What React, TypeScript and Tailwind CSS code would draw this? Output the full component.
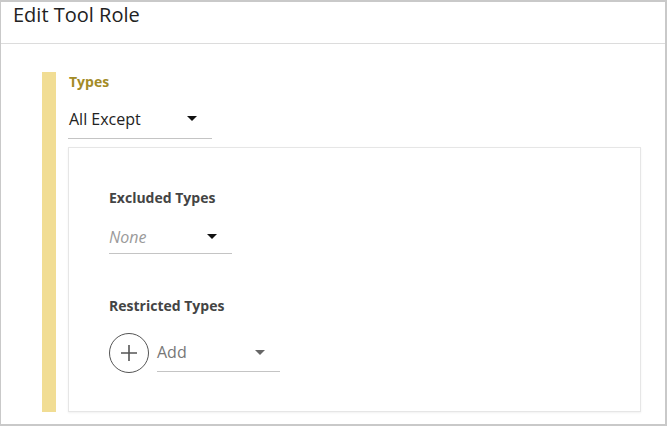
import React from "react";

const Caret = ({ className = "" }: { className?: string }) => (
  <svg width="10" height="5" viewBox="0 0 10 5" className={className}>
    <path d="M0 0h10L5 5z" fill="currentColor" />
  </svg>
);

const App = () => {
  return (
    <div
      className="w-[667px] h-[426px] bg-white border-t-2 border-l border-r-2 border-b-2 border-[#c9c9c9] flex flex-col"
      style={{ fontFamily: '"Open Sans", "Liberation Sans", sans-serif' }}
    >
      {/* header */}
      <div className="h-[42px] border-b border-[#dcdcdc] flex items-start">
        <h1 className="ml-[12px] -mt-[1px] text-[20px] leading-[28px] text-[#222]">Edit Tool Role</h1>
      </div>

      <div className="flex pl-[41px] pt-[28px] pr-[24px]">
        <div className="w-[14px] h-[340px] bg-[#f1dd94]" />
        <div className="flex-1 ml-[12px]">
          <div className="pl-[1px] text-[14px] font-bold leading-[20px] text-[#a38b27]">Types</div>

          <div className="mt-[9px] w-[144px] h-[38px] border-b border-[#c4c4c4] flex items-center justify-between pl-[1px] pr-[15px] pb-[2px]">
            <span className="text-[16px] text-[#222]">All Except</span>
            <Caret className="text-[#111]" />
          </div>

          <div className="mt-[8px] h-[265px] border border-[#e6e6e6] shadow-[0_1px_2px_rgba(0,0,0,0.06)] pl-[40px] pt-[39px]">
            <div className="text-[14px] font-bold leading-[22px] text-[#444]">Excluded Types</div>
            <div className="mt-[13px] w-[123px] h-[32px] border-b border-[#c4c4c4] flex items-center justify-between pr-[15px] pb-[2px]">
              <span className="text-[16px] italic text-[#9a9a9a]">None</span>
              <Caret className="text-[#111]" />
            </div>

            <div className="mt-[41px] text-[14px] font-bold leading-[22px] text-[#444]">Restricted Types</div>
            <div className="mt-[16px] flex items-start">
              <div className="w-[40px] h-[40px] rounded-full border border-[#555] flex items-center justify-center text-[#555]">
                <svg width="18" height="18" viewBox="0 0 18 18">
                  <path d="M9 1v16M1 9h16" stroke="currentColor" strokeWidth="1.6" />
                </svg>
              </div>
              <div className="ml-[8px] w-[123px] h-[39px] border-b border-[#c4c4c4] flex items-center justify-between pr-[15px]">
                <span className="text-[16px] text-[#777]">Add</span>
                <Caret className="text-[#666]" />
              </div>
            </div>
          </div>
        </div>
      </div>
    </div>
  );
};

export default App;
